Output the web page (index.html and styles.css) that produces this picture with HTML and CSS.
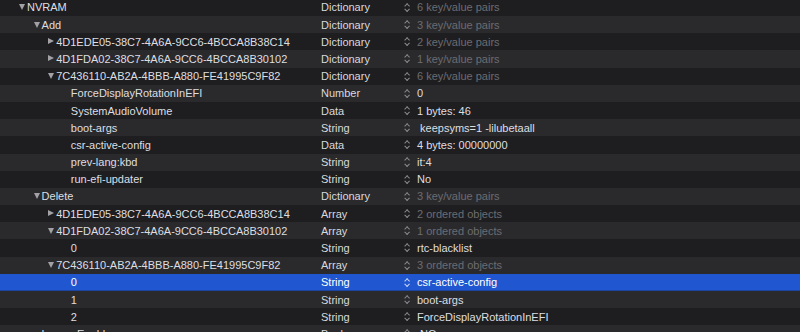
FILE: index.html
```html
<!DOCTYPE html>
<html lang="en">
<head>
    <meta charset="UTF-8">
    <meta name="viewport" content="width=device-width, initial-scale=1.0">
    <title>config.plist</title>
    <link rel="stylesheet" href="styles.css">
</head>
<body>
    <div class="plist">
        <div class="row">
            <div class="key l0"><span class="tw open"></span>NVRAM</div>
            <div class="type">Dictionary</div>
            <div class="value dim"><span class="step"></span>6 key/value pairs</div>
        </div>
        <div class="row">
            <div class="key l1"><span class="tw open"></span>Add</div>
            <div class="type">Dictionary</div>
            <div class="value dim"><span class="step"></span>3 key/value pairs</div>
        </div>
        <div class="row">
            <div class="key l2"><span class="tw closed"></span>4D1EDE05-38C7-4A6A-9CC6-4BCCA8B38C14</div>
            <div class="type">Dictionary</div>
            <div class="value dim"><span class="step"></span>2 key/value pairs</div>
        </div>
        <div class="row">
            <div class="key l2"><span class="tw closed"></span>4D1FDA02-38C7-4A6A-9CC6-4BCCA8B30102</div>
            <div class="type">Dictionary</div>
            <div class="value dim"><span class="step"></span>1 key/value pairs</div>
        </div>
        <div class="row">
            <div class="key l2"><span class="tw open"></span>7C436110-AB2A-4BBB-A880-FE41995C9F82</div>
            <div class="type">Dictionary</div>
            <div class="value dim"><span class="step"></span>6 key/value pairs</div>
        </div>
        <div class="row">
            <div class="key l3"><span class="tw"></span>ForceDisplayRotationInEFI</div>
            <div class="type">Number</div>
            <div class="value"><span class="step"></span>0</div>
        </div>
        <div class="row">
            <div class="key l3"><span class="tw"></span>SystemAudioVolume</div>
            <div class="type">Data</div>
            <div class="value"><span class="step"></span>1 bytes: 46</div>
        </div>
        <div class="row">
            <div class="key l3"><span class="tw"></span>boot-args</div>
            <div class="type">String</div>
            <div class="value"><span class="step"></span> keepsyms=1 -lilubetaall</div>
        </div>
        <div class="row">
            <div class="key l3"><span class="tw"></span>csr-active-config</div>
            <div class="type">Data</div>
            <div class="value"><span class="step"></span>4 bytes: 00000000</div>
        </div>
        <div class="row">
            <div class="key l3"><span class="tw"></span>prev-lang:kbd</div>
            <div class="type">String</div>
            <div class="value"><span class="step"></span>it:4</div>
        </div>
        <div class="row">
            <div class="key l3"><span class="tw"></span>run-efi-updater</div>
            <div class="type">String</div>
            <div class="value"><span class="step"></span>No</div>
        </div>
        <div class="row">
            <div class="key l1"><span class="tw open"></span>Delete</div>
            <div class="type">Dictionary</div>
            <div class="value dim"><span class="step"></span>3 key/value pairs</div>
        </div>
        <div class="row">
            <div class="key l2"><span class="tw closed"></span>4D1EDE05-38C7-4A6A-9CC6-4BCCA8B38C14</div>
            <div class="type">Array</div>
            <div class="value dim"><span class="step"></span>2 ordered objects</div>
        </div>
        <div class="row">
            <div class="key l2"><span class="tw open"></span>4D1FDA02-38C7-4A6A-9CC6-4BCCA8B30102</div>
            <div class="type">Array</div>
            <div class="value dim"><span class="step"></span>1 ordered objects</div>
        </div>
        <div class="row">
            <div class="key l3"><span class="tw"></span>0</div>
            <div class="type">String</div>
            <div class="value"><span class="step"></span>rtc-blacklist</div>
        </div>
        <div class="row">
            <div class="key l2"><span class="tw open"></span>7C436110-AB2A-4BBB-A880-FE41995C9F82</div>
            <div class="type">Array</div>
            <div class="value dim"><span class="step"></span>3 ordered objects</div>
        </div>
        <div class="row selected">
            <div class="key l3"><span class="tw"></span>0</div>
            <div class="type">String</div>
            <div class="value"><span class="step"></span>csr-active-config</div>
        </div>
        <div class="row">
            <div class="key l3"><span class="tw"></span>1</div>
            <div class="type">String</div>
            <div class="value"><span class="step"></span>boot-args</div>
        </div>
        <div class="row">
            <div class="key l3"><span class="tw"></span>2</div>
            <div class="type">String</div>
            <div class="value"><span class="step"></span>ForceDisplayRotationInEFI</div>
        </div>
        <div class="row">
            <div class="key l1"><span class="tw"></span>LegacyEnable</div>
            <div class="type">Boolean</div>
            <div class="value"><span class="step"></span> NO</div>
        </div>
    </div>
</body>
</html>
```

FILE: styles.css
```css
body {
    margin: 0;
    background: #1e1e21;
    font-family: "Liberation Sans", Arial, sans-serif;
    font-size: 11px;
    color: #dedee0;
    overflow: hidden;
}

.plist {
    margin-top: -1.2px;
}

.row {
    display: grid;
    grid-template-columns: 321px 80px 1fr;
    height: 17.2px;
    align-items: center;
    background: #1e1e21;
    white-space: pre;
}

.row:nth-child(even) {
    background: #2a2a2d;
}

.row.selected {
    background: #2057d0;
    box-shadow: inset 0 -1px 0 #1b45a3;
    color: #fff;
}

.key {
    display: flex;
    align-items: center;
}

.l0 { padding-left: 18px; }
.l1 { padding-left: 32.6px; }
.l2 { padding-left: 47.2px; }
.l3 { padding-left: 61.8px; }

.tw {
    width: 9px;
    height: 8px;
    flex-shrink: 0;
    position: relative;
}

/* disclosure triangles */
.tw.open::before,
.tw.closed::before {
    content: "";
    position: absolute;
    width: 0;
    height: 0;
}

.tw.open::before {
    left: 1px;
    top: 1px;
    border-left: 3.5px solid transparent;
    border-right: 3.5px solid transparent;
    border-top: 6px solid #a2a2a6;
}

.tw.closed::before {
    left: 1px;
    top: 0.5px;
    border-top: 3.5px solid transparent;
    border-bottom: 3.5px solid transparent;
    border-left: 6px solid #a2a2a6;
}

.type {
    color: #d9d9db;
}

.selected .type {
    color: #fff;
}

.value {
    display: flex;
    align-items: center;
    padding-left: 2px;
}

.value.dim {
    color: #6c6c70;
}

/* up/down stepper */
.step {
    width: 7px;
    height: 10px;
    margin-right: 7px;
    flex-shrink: 0;
    position: relative;
}

.step::before,
.step::after {
    content: "";
    position: absolute;
    left: 1.5px;
    width: 3.2px;
    height: 3.2px;
    border-left: 1.1px solid #8a8a8f;
    border-top: 1.1px solid #8a8a8f;
}

.step::before {
    top: 1.4px;
    transform: rotate(45deg);
}

.step::after {
    bottom: 1.4px;
    transform: rotate(-135deg);
}

.selected .step::before,
.selected .step::after {
    border-color: #c8d6f5;
}
```
